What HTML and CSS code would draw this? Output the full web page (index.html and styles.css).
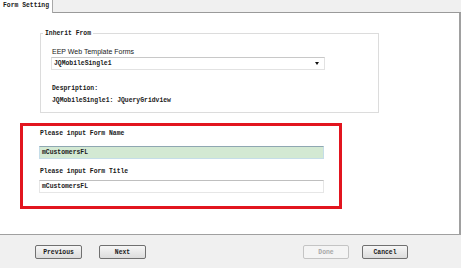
FILE: index.html
```html
<!DOCTYPE html>
<html lang="en">
<head>
    <meta charset="UTF-8" />
    <title>Form Setting</title>
    <link rel="stylesheet" href="styles.css">
</head>
<body>
    <div class="window">
        <div class="tab-strip">
            <div class="tab">Form Setting</div>
        </div>

        <main class="content">
            <div class="group">
                <span class="legend">Inherit From</span>
                <p class="sans-label">EEP Web Template Forms</p>
                <div class="select">
                    <span>JQMobileSingle1</span>
                    <span class="arrow"></span>
                </div>
                <p class="label desc-title">Despription:</p>
                <p class="label">JQMobileSingle1: JQueryGridview</p>
            </div>

            <div class="highlight">
                <p class="label">Please input Form Name</p>
                <div class="field field-active">mCustomersFL</div>
                <p class="label label-second">Please input Form Title</p>
                <div class="field">mCustomersFL</div>
            </div>
        </main>

        <footer class="footer">
            <button class="btn btn-prev">Previous</button>
            <button class="btn btn-next">Next</button>
            <button class="btn btn-done" disabled>Done</button>
            <button class="btn btn-cancel">Cancel</button>
        </footer>
    </div>
</body>
</html>
```

FILE: styles.css
```css
* {
    margin: 0;
    padding: 0;
    box-sizing: border-box;
}

body {
    background: #f0f0f0;
    font-family: "Liberation Mono", monospace;
    font-size: 6.4px;
    font-weight: bold;
    color: #1a1a1a;
}

.window {
    width: 461px;
    height: 268px;
    display: flex;
    flex-direction: column;
}

.tab-strip {
    height: 13px;
    background: #f0f0f0;
    border-bottom: 1px solid #9a9a9a;
    display: flex;
}

.tab {
    width: 53px;
    height: 13px;
    background: #fff;
    border-right: 1px solid #a8a8a8;
    padding-left: 3px;
    line-height: 12px;
}

.content {
    height: 221px;
    background: #fff;
    border-right: 2px solid #a0a0a0;
    padding-top: 20px;
}

.group {
    position: relative;
    margin-left: 40px;
    width: 339px;
    height: 80px;
    border: 1px solid #dcdcdc;
    padding: 13px 0 0 10px;
}

.legend {
    position: absolute;
    top: -6px;
    left: 2px;
    padding: 0 2px;
    background: #fff;
    line-height: 11px;
}

.sans-label {
    font-family: "Liberation Sans", Arial, sans-serif;
    font-size: 7px;
    font-weight: normal;
    line-height: 10px;
    padding-left: 1px;
}

.select {
    width: 274px;
    height: 13px;
    border: 1px solid #e2e2e2;
    border-top-color: #c8c8c8;
    display: flex;
    align-items: center;
    justify-content: space-between;
    padding: 0 5px 0 2px;
    line-height: 11px;
}

.arrow {
    width: 0;
    height: 0;
    border-left: 2.5px solid transparent;
    border-right: 2.5px solid transparent;
    border-top: 3px solid #111;
}

.label {
    line-height: 12px;
    padding-left: 1px;
}

.desc-title {
    margin-top: 13px;
}

.highlight {
    margin: 10px 0 0 20px;
    width: 322px;
    height: 86px;
    border: 3px solid #e2151f;
    padding: 2px 0 0 16px;
}

.field {
    width: 285px;
    height: 13px;
    margin-top: 6px;
    border: 1px solid #e6e6e6;
    border-top-color: #bfbfbf;
    padding-left: 2px;
    line-height: 11px;
}

.field-active {
    background: #d3e9d3;
    border: 1px solid #c5dde8;
    border-top-color: #8fa7b2;
}

.label-second {
    margin-top: 7px;
}

.label-second + .field {
    margin-top: 2px;
}

.footer {
    flex: 1;
    background: #f0f0f0;
    border-top: 1px solid #a0a0a0;
    display: flex;
    align-items: flex-start;
    padding-top: 10px;
}

.btn {
    height: 14px;
    width: 47px;
    font-family: "Liberation Mono", monospace;
    font-size: 6.4px;
    font-weight: bold;
    color: #1a1a1a;
    background: linear-gradient(#f6f6f6, #dcdcdc);
    border: 1px solid #707070;
    border-radius: 2px;
}

.btn-prev {
    margin-left: 35px;
}

.btn-next {
    margin-left: 17px;
}

.btn-done {
    margin-left: auto;
    width: 46px;
    color: #a8a8a8;
    background: #f4f4f4;
    border-color: #c4c4c4;
}

.btn-cancel {
    margin: 0 53px 0 13px;
    width: 46px;
}
```
